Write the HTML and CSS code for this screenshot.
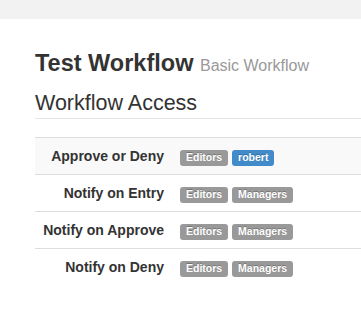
FILE: index.html
```html
<!DOCTYPE html>
<html lang="en">
<head>
  <meta charset="UTF-8" />
  <title>Test Workflow</title>
  <link rel="stylesheet" href="styles.css">
</head>
<body>
  <div class="topbar"></div>
  <div class="content">
    <h1 class="title">Test Workflow <small>Basic Workflow</small></h1>
    <h2 class="section">Workflow Access</h2>
    <table class="access">
      <tr>
        <th>Approve or Deny</th>
        <td><span class="label">Editors</span> <span class="label label-blue">robert</span></td>
      </tr>
      <tr>
        <th>Notify on Entry</th>
        <td><span class="label">Editors</span> <span class="label">Managers</span></td>
      </tr>
      <tr>
        <th>Notify on Approve</th>
        <td><span class="label">Editors</span> <span class="label">Managers</span></td>
      </tr>
      <tr>
        <th>Notify on Deny</th>
        <td><span class="label">Editors</span> <span class="label">Managers</span></td>
      </tr>
    </table>
  </div>
</body>
</html>
```

FILE: styles.css
```css
body {
  font-family: "Liberation Sans", Arial, sans-serif;
  font-size: 14px;
  line-height: 20px;
  color: #333;
  background-color: #fff;
  margin: 0;
  padding: 0;
  overflow: hidden;
}

.topbar {
  height: 19px;
  background-color: #f2f2f2;
}

.content {
  padding-left: 35px;
}

.title {
  font-size: 23.5px;
  font-weight: bold;
  line-height: 30px;
  margin: 0;
  padding-top: 29px;
}

.title small {
  font-size: 16px;
  font-weight: normal;
  color: #999;
}

.section {
  font-size: 21.5px;
  font-weight: normal;
  line-height: 28px;
  margin: 8px 0 0 0;
  padding-bottom: 1px;
  border-bottom: 1px solid #e5e5e5;
}

.access {
  width: 340px;
  margin-top: 18px;
  border-collapse: collapse;
}

.access th,
.access td {
  padding: 8px;
  border-top: 1px solid #ddd;
  vertical-align: top;
}

.access th {
  width: 121px;
  text-align: right;
  font-weight: bold;
  white-space: nowrap;
}

.access td {
  text-align: left;
}

.access tr:first-child {
  background-color: #f9f9f9;
}

.label {
  display: inline-block;
  font-size: 10.5px;
  font-weight: bold;
  line-height: 1;
  color: #fff;
  padding: 2px 6px 3px;
  border-radius: 3px;
  background-color: #999;
  text-shadow: 0 -1px 0 rgba(0, 0, 0, 0.25);
}

.label-blue {
  background-color: #428bca;
}
```
